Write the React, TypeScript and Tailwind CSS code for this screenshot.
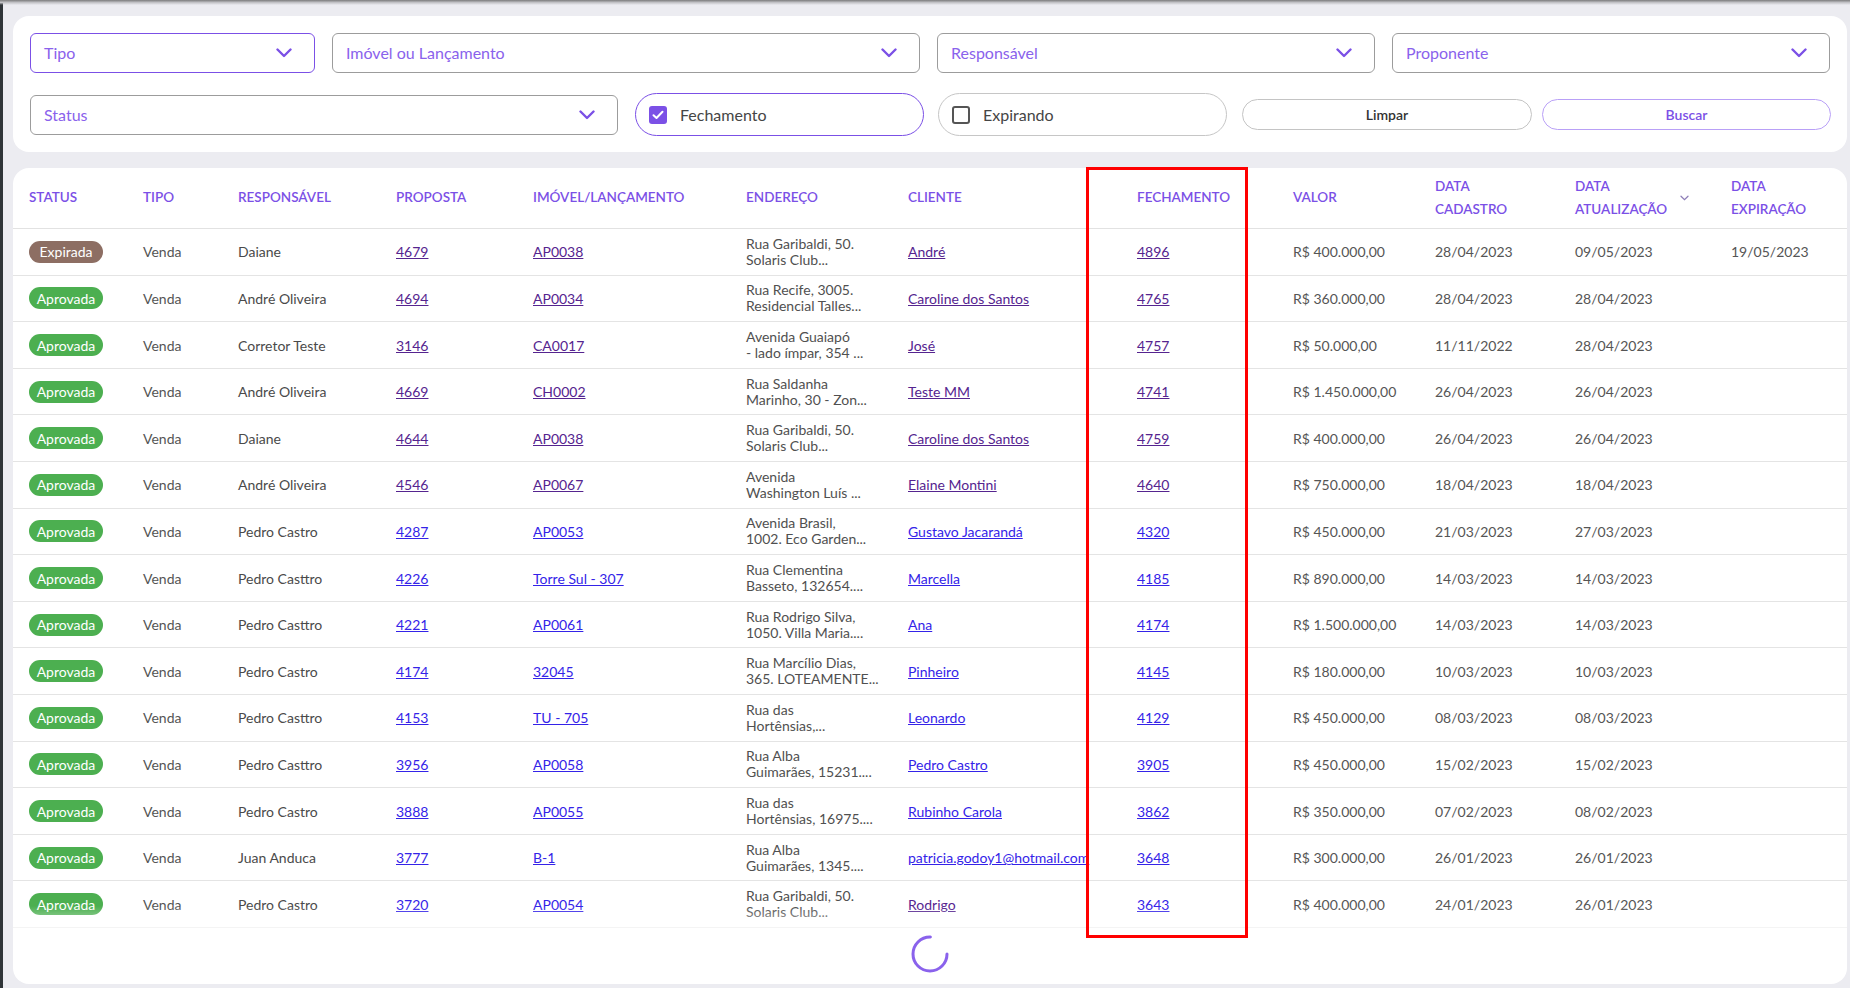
import clsx from "clsx";

type Row = {
  status: "Expirada" | "Aprovada";
  resp: string;
  proposta: string;
  imovel: string;
  end: [string, string];
  cliente: string;
  fech: string;
  valor: string;
  cad: string;
  atu: string;
  exp?: string;
  // visited links render purple, others default blue
  seen?: boolean;
  clienteSeen?: boolean;
};

const rows: Row[] = [
  { status: "Expirada", resp: "Daiane", proposta: "4679", imovel: "AP0038", end: ["Rua Garibaldi, 50.", "Solaris Club..."], cliente: "André", fech: "4896", valor: "R$ 400.000,00", cad: "28/04/2023", atu: "09/05/2023", exp: "19/05/2023", seen: true },
  { status: "Aprovada", resp: "André Oliveira", proposta: "4694", imovel: "AP0034", end: ["Rua Recife, 3005.", "Residencial Talles..."], cliente: "Caroline dos Santos", fech: "4765", valor: "R$ 360.000,00", cad: "28/04/2023", atu: "28/04/2023", seen: true },
  { status: "Aprovada", resp: "Corretor Teste", proposta: "3146", imovel: "CA0017", end: ["Avenida Guaiapó", "- lado ímpar, 354 ..."], cliente: "José", fech: "4757", valor: "R$ 50.000,00", cad: "11/11/2022", atu: "28/04/2023", seen: true },
  { status: "Aprovada", resp: "André Oliveira", proposta: "4669", imovel: "CH0002", end: ["Rua Saldanha", "Marinho, 30 - Zon..."], cliente: "Teste MM", fech: "4741", valor: "R$ 1.450.000,00", cad: "26/04/2023", atu: "26/04/2023", seen: true },
  { status: "Aprovada", resp: "Daiane", proposta: "4644", imovel: "AP0038", end: ["Rua Garibaldi, 50.", "Solaris Club..."], cliente: "Caroline dos Santos", fech: "4759", valor: "R$ 400.000,00", cad: "26/04/2023", atu: "26/04/2023", seen: true },
  { status: "Aprovada", resp: "André Oliveira", proposta: "4546", imovel: "AP0067", end: ["Avenida", "Washington Luís ..."], cliente: "Elaine Montini", fech: "4640", valor: "R$ 750.000,00", cad: "18/04/2023", atu: "18/04/2023", seen: true },
  { status: "Aprovada", resp: "Pedro Castro", proposta: "4287", imovel: "AP0053", end: ["Avenida Brasil,", "1002. Eco Garden..."], cliente: "Gustavo Jacarandá", fech: "4320", valor: "R$ 450.000,00", cad: "21/03/2023", atu: "27/03/2023" },
  { status: "Aprovada", resp: "Pedro Casttro", proposta: "4226", imovel: "Torre Sul - 307", end: ["Rua Clementina", "Basseto, 132654...."], cliente: "Marcella", fech: "4185", valor: "R$ 890.000,00", cad: "14/03/2023", atu: "14/03/2023" },
  { status: "Aprovada", resp: "Pedro Casttro", proposta: "4221", imovel: "AP0061", end: ["Rua Rodrigo Silva,", "1050. Villa Maria...."], cliente: "Ana", fech: "4174", valor: "R$ 1.500.000,00", cad: "14/03/2023", atu: "14/03/2023" },
  { status: "Aprovada", resp: "Pedro Castro", proposta: "4174", imovel: "32045", end: ["Rua Marcílio Dias,", "365. LOTEAMENTE..."], cliente: "Pinheiro", fech: "4145", valor: "R$ 180.000,00", cad: "10/03/2023", atu: "10/03/2023" },
  { status: "Aprovada", resp: "Pedro Casttro", proposta: "4153", imovel: "TU - 705", end: ["Rua das", "Hortênsias,..."], cliente: "Leonardo", fech: "4129", valor: "R$ 450.000,00", cad: "08/03/2023", atu: "08/03/2023" },
  { status: "Aprovada", resp: "Pedro Casttro", proposta: "3956", imovel: "AP0058", end: ["Rua Alba", "Guimarães, 15231...."], cliente: "Pedro Castro", fech: "3905", valor: "R$ 450.000,00", cad: "15/02/2023", atu: "15/02/2023" },
  { status: "Aprovada", resp: "Pedro Castro", proposta: "3888", imovel: "AP0055", end: ["Rua das", "Hortênsias, 16975...."], cliente: "Rubinho Carola", fech: "3862", valor: "R$ 350.000,00", cad: "07/02/2023", atu: "08/02/2023" },
  { status: "Aprovada", resp: "Juan Anduca", proposta: "3777", imovel: "B-1", end: ["Rua Alba", "Guimarães, 1345...."], cliente: "patricia.godoy1@hotmail.com", fech: "3648", valor: "R$ 300.000,00", cad: "26/01/2023", atu: "26/01/2023" },
  { status: "Aprovada", resp: "Pedro Castro", proposta: "3720", imovel: "AP0054", end: ["Rua Garibaldi, 50.", "Solaris Club..."], cliente: "Rodrigo", fech: "3643", valor: "R$ 400.000,00", cad: "24/01/2023", atu: "26/01/2023", clienteSeen: true },
];

function Chevron() {
  return (
    <svg width="16" height="10" viewBox="0 0 16 10" fill="none">
      <path d="M1.5 1.5 8 8l6.5-6.5" stroke="#7b50e6" strokeWidth="2.4" strokeLinecap="round" strokeLinejoin="round" />
    </svg>
  );
}

function Select({ label, active }: { label: string; active?: boolean }) {
  return (
    <div
      className={clsx(
        "flex h-10 items-center justify-between rounded-md border bg-white pl-[13px] pr-[22px]",
        active ? "border-[#7b50e6]" : "border-[#9c9c9c]",
      )}
    >
      <span className="text-base text-[#8a62ec]">{label}</span>
      <Chevron />
    </div>
  );
}

function CheckPill({ label, checked }: { label: string; checked?: boolean }) {
  return (
    <div
      className={clsx(
        "flex h-[43px] w-[289px] items-center gap-[13px] rounded-full border bg-white pl-[13px]",
        checked ? "border-[#7b50e6]" : "border-[#c6c6c6]",
      )}
    >
      {checked ? (
        <span className="flex h-[18px] w-[18px] items-center justify-center rounded-[3px] bg-[#7b50e6]">
          <svg width="12" height="10" viewBox="0 0 12 10" fill="none">
            <path d="M1.5 5.2 4.5 8 10.5 1.8" stroke="#fff" strokeWidth="2" strokeLinecap="round" strokeLinejoin="round" />
          </svg>
        </span>
      ) : (
        <span className="h-[18px] w-[18px] rounded-[3px] border-2 border-[#555]" />
      )}
      <span className="text-base text-[#454545]">{label}</span>
    </div>
  );
}

function Badge({ status }: { status: Row["status"] }) {
  return (
    <span
      className={clsx(
        "inline-flex h-[22px] w-[74px] items-center justify-center rounded-full text-[14px] text-white",
        status === "Expirada" ? "bg-[#8d6e63]" : "bg-[#4caf50]",
      )}
    >
      {status}
    </span>
  );
}

function Link({ children, seen }: { children: string; seen?: boolean }) {
  return (
    <a className={clsx("whitespace-nowrap underline", seen ? "text-[#55248f]" : "text-[#3423e8]")}>{children}</a>
  );
}

const cols = ["w-[114px]", "w-[95px]", "w-[158px]", "w-[137px]", "w-[213px]", "w-[162px]", "w-[229px]", "w-[156px]", "w-[142px]", "w-[140px]", "w-[156px]", "w-[132px]"];

export default function App() {
  return (
    <div className="relative flex min-h-screen bg-[#ececf1] font-[Lato,sans-serif]">
      <div className="w-[3px] shrink-0 bg-[#2f3438]" />
      <div className="pointer-events-none absolute inset-x-0 top-0 h-[5px] bg-linear-to-b from-[#7c7c7c] via-[#c2c2c6] to-transparent" />

      <div className="flex flex-1 flex-col gap-[15.6px] pb-[5px] pl-[10px] pr-[3px] pt-[16px]">
        {/* Filters */}
        <div className="flex flex-col gap-5 rounded-2xl bg-white pb-4 pl-[17px] pr-4 pt-[17px]">
          <div className="grid grid-cols-[285px_588px_438px_438px] gap-x-[17px]">
            <Select label="Tipo" active />
            <Select label="Imóvel ou Lançamento" />
            <Select label="Responsável" />
            <Select label="Proponente" />
          </div>
          <div className="flex items-center">
            <div className="w-[588px]">
              <Select label="Status" />
            </div>
            <div className="ml-[17px]">
              <CheckPill label="Fechamento" checked />
            </div>
            <div className="ml-[14px]">
              <CheckPill label="Expirando" />
            </div>
            <button className="ml-[15px] h-[31px] w-[290px] rounded-full border border-[#c4c4c4] bg-white text-[14px] font-semibold text-[#333]">
              Limpar
            </button>
            <button className="ml-[10px] h-[31px] w-[289px] rounded-full border border-[#b9a0f7] bg-white text-[14px] font-semibold text-[#7b50e6]">
              Buscar
            </button>
          </div>
        </div>

        {/* Results */}
        <div className="flex flex-1 flex-col rounded-2xl bg-white">
          <div className="relative">
            <table className="w-full table-fixed border-collapse text-[14px] text-[#555]">
              <colgroup>
                {cols.map((c, i) => (
                  <col key={i} className={c} />
                ))}
              </colgroup>
              <thead>
                <tr className="h-[61px] border-b border-[#e2e2e2] text-left text-[13.5px] font-semibold uppercase leading-[23px] text-[#7b50e6]">
                  <th className="pl-4 font-semibold">Status</th>
                  <th className="pl-4 font-semibold">Tipo</th>
                  <th className="pl-4 font-semibold">Responsável</th>
                  <th className="pl-4 font-semibold">Proposta</th>
                  <th className="pl-4 font-semibold">Imóvel/Lançamento</th>
                  <th className="pl-4 font-semibold">Endereço</th>
                  <th className="pl-4 font-semibold">Cliente</th>
                  <th className="pl-4 font-semibold">Fechamento</th>
                  <th className="pl-4 font-semibold">Valor</th>
                  <th className="pl-4 font-semibold">
                    Data
                    <br />
                    Cadastro
                  </th>
                  <th className="pl-4 font-semibold">
                    <div className="flex items-center">
                      <span>
                        Data
                        <br />
                        Atualização
                      </span>
                      <svg className="ml-[13px]" width="9" height="6" viewBox="0 0 9 6" fill="none">
                        <path d="M1 1.2 4.5 4.6 8 1.2" stroke="#8f7fb8" strokeWidth="1.3" strokeLinecap="round" />
                      </svg>
                    </div>
                  </th>
                  <th className="pl-4 font-semibold">
                    Data
                    <br />
                    Expiração
                  </th>
                </tr>
              </thead>
              <tbody>
                {rows.map((r, i) => (
                  <tr key={i} className="h-[46.6px] border-b border-[#e4e4e4]">
                    <td className="pl-4">
                      <Badge status={r.status} />
                    </td>
                    <td className="pl-4">Venda</td>
                    <td className="whitespace-nowrap pl-4 text-[#4a4a4a]">{r.resp}</td>
                    <td className="pl-4">
                      <Link seen={r.seen}>{r.proposta}</Link>
                    </td>
                    <td className="pl-4">
                      <Link seen={r.seen}>{r.imovel}</Link>
                    </td>
                    <td className="pl-4 leading-[16px] text-[#505050]">
                      <span className="block whitespace-nowrap">{r.end[0]}</span>
                      <span className="block whitespace-nowrap">{r.end[1]}</span>
                    </td>
                    <td className="pl-4">
                      <Link seen={r.seen || r.clienteSeen}>{r.cliente}</Link>
                    </td>
                    <td className="pl-4">
                      <Link seen={r.seen}>{r.fech}</Link>
                    </td>
                    <td className="whitespace-nowrap pl-4">{r.valor}</td>
                    <td className="pl-4">{r.cad}</td>
                    <td className="pl-4">{r.atu}</td>
                    <td className="pl-4">{r.exp ?? ""}</td>
                  </tr>
                ))}
              </tbody>
            </table>
            <div className="pointer-events-none absolute inset-x-0 bottom-0 h-[22px] bg-linear-to-b from-white/0 to-white/60" />
          </div>

          <div className="flex justify-center pb-[11px] pt-[7px]">
            <svg width="38" height="38" viewBox="0 0 38 38" fill="none">
              <circle cx="19" cy="19" r="17" stroke="#8a62ec" strokeWidth="3" strokeDasharray="80 107" strokeLinecap="round" />
            </svg>
          </div>
        </div>
      </div>

      {/* highlight annotation */}
      <div className="pointer-events-none absolute left-[1086px] top-[167px] h-[771px] w-[162px] border-[3px] border-[#ff0000]" />
    </div>
  );
}
